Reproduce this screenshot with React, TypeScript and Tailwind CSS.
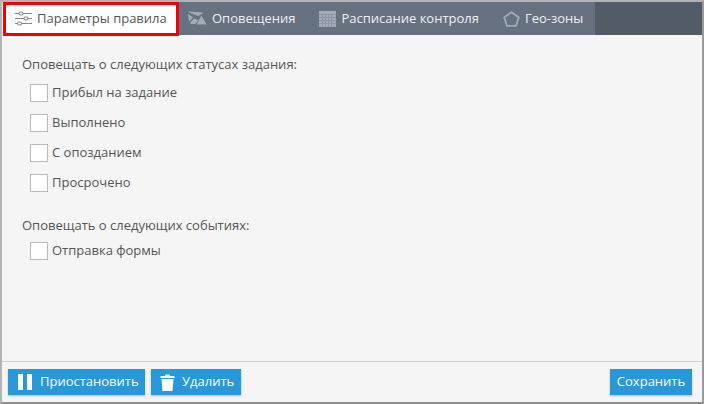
const font = { fontFamily: '"Open Sans", sans-serif' };

function Check({ label }: { label: string }) {
  return (
    <label className="flex items-center h-[20px] gap-[4px]">
      <span className="w-[18px] h-[18px] bg-white border border-[#bbbbbb]" />
      <span className="text-[13px] text-[#555555]">{label}</span>
    </label>
  );
}

function SlidersIcon() {
  return (
    <svg width="17" height="15" viewBox="0 0 17 15" fill="none" stroke="#888888" strokeWidth="1.1">
      <path d="M0 2.5H4M8 2.5H17M0 7.5H9M13 7.5H17M0 12.5H2.5M6.5 12.5H17" />
      <rect x="4" y="1" width="4" height="3" rx="1.4" />
      <rect x="9" y="6" width="4" height="3" rx="1.4" />
      <rect x="2.5" y="11" width="4" height="3" rx="1.4" />
    </svg>
  );
}

function MailIcon() {
  return (
    <svg width="19" height="15" viewBox="0 0 19 15" fill="#a3abb4">
      <path d="M0 1L10 5L15 2.5L14 1.5L0 0.5Z" />
      <path d="M0 2.5L5 6.5L1 10.5Z" />
      <path d="M6 7.5L9.5 9L11 8L7.5 13H3L2 11.5Z" />
      <path d="M13.5 4.5L18.5 13.5H8.5Z" />
    </svg>
  );
}

function GridIcon() {
  return (
    <svg width="17" height="16" viewBox="0 0 17 16">
      <rect width="17" height="16" fill="#a3abb4" />
      <path d="M0 3.5H17M0 6.5H17M0 9.5H17M0 12.5H17M3.5 3V16M6.5 3V16M9.5 3V16M12.5 3V16" stroke="#8b95a0" strokeWidth="1" />
    </svg>
  );
}

function PentagonIcon() {
  return (
    <svg width="17" height="16" viewBox="0 0 17 16" fill="none" stroke="#a3abb4" strokeWidth="1.8">
      <path d="M8.5 1.2L15.8 6.4L13 14.8H4L1.2 6.4Z" />
    </svg>
  );
}

function TrashIcon() {
  return (
    <svg width="15" height="17" viewBox="0 0 15 17" fill="#ffffff">
      <path d="M5.5 0.5H9.5L10 2H14.5V4H0.5V2H5Z" />
      <path d="M1.5 5H13.5L12.5 17H2.5Z" />
    </svg>
  );
}

function Tab({ icon, label }: { icon: React.ReactNode; label: string }) {
  return (
    <div className="flex items-center gap-[5px] text-[13px] font-medium text-[#eef0f2]">
      {icon}
      <span>{label}</span>
    </div>
  );
}

export default function App() {
  return (
    <div style={font} className="w-[704px] h-[404px] flex flex-col bg-[#f5f5f5] border-2 border-[#b4b4b4] border-r-[#9a9a9a] border-b-[#8c8c8c]">
      <div className="h-[33px] flex bg-[#515c67] relative shrink-0">
        <div className="flex h-full w-[593px] bg-[#667280] items-center">
          <div className="w-[176px] h-full bg-white flex items-center pl-[13px] gap-[5px] text-[13px] text-[#555555] shrink-0">
            <SlidersIcon />
            <span>Параметры правила</span>
          </div>
          <div className="flex items-center gap-[24px] pl-[10px]">
            <Tab icon={<MailIcon />} label="Оповещения" />
            <Tab icon={<GridIcon />} label="Расписание контроля" />
            <Tab icon={<PentagonIcon />} label="Гео-зоны" />
          </div>
        </div>
        <div className="absolute left-[1px] top-0 w-[176px] h-[34px] border-[3px] border-[#f00000]" />
      </div>

      <div className="flex-1 pl-[20px] pt-[20px]">
        <p className="text-[13px] leading-[18px] text-[#555555]">Оповещать о следующих статусах задания:</p>
        <div className="flex flex-col gap-[10px] pl-[8px] mt-[10px]">
          <Check label="Прибыл на задание" />
          <Check label="Выполнено" />
          <Check label="С опозданием" />
          <Check label="Просрочено" />
        </div>
        <p className="text-[13px] leading-[18px] text-[#555555] mt-[23px]">Оповещать о следующих событиях:</p>
        <div className="flex flex-col pl-[8px] mt-[7px]">
          <Check label="Отправка формы" />
        </div>
      </div>

      <div className="h-[41px] border-t border-[#cccccc] flex items-start justify-between pl-[6px] pr-[10px] pt-[7px] shrink-0">
        <div className="flex gap-[6px]">
          <button className="h-[26px] w-[137px] bg-[#2898d8] text-white text-[13px] font-medium flex items-center pl-[10px] gap-[8px] shadow-[0_1px_2px_rgba(0,0,0,0.25)]">
            <span className="flex gap-[4px]">
              <span className="w-[5px] h-[16px] bg-white" />
              <span className="w-[5px] h-[16px] bg-white" />
            </span>
            Приостановить
          </button>
          <button className="h-[26px] w-[90px] bg-[#2898d8] text-white text-[13px] font-medium flex items-center pl-[9px] gap-[7px] shadow-[0_1px_2px_rgba(0,0,0,0.25)]">
            <TrashIcon />
            Удалить
          </button>
        </div>
        <button className="h-[26px] w-[82px] bg-[#2898d8] text-white text-[13px] font-medium flex items-center justify-center shadow-[0_1px_2px_rgba(0,0,0,0.25)]">
          Сохранить
        </button>
      </div>
    </div>
  );
}
